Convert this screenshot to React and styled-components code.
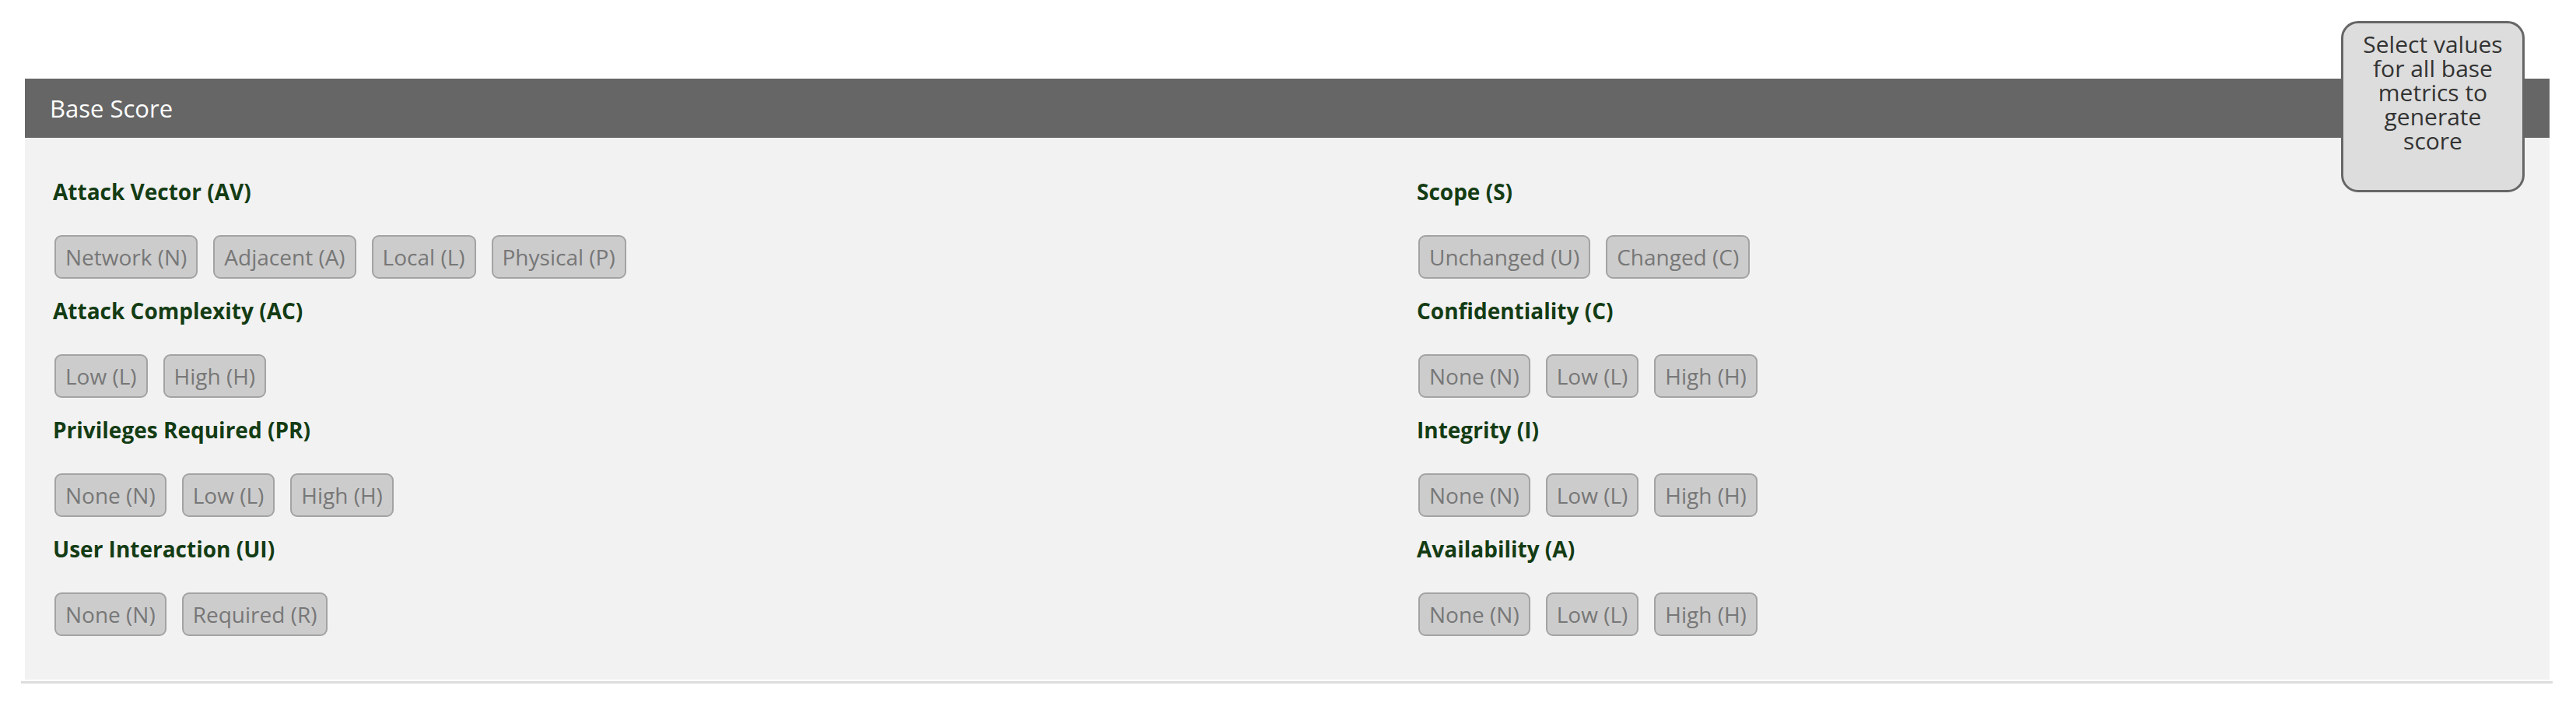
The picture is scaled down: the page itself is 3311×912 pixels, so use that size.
import React from 'react';
import styled, { createGlobalStyle } from 'styled-components';

const GlobalStyle = createGlobalStyle`
  html, body {
    margin: 0;
    padding: 0;
    background: #fff;
    font-family: 'Open Sans', 'DejaVu Sans', sans-serif;
  }
`;

const Page = styled.div`
  position: relative;
  padding: 101px 34px 0 32px;
`;

const Panel = styled.section`
  background: #f2f2f2;
`;

const PanelHeading = styled.div`
  height: 76px;
  display: flex;
  align-items: center;
  padding-left: 32px;
  background: #666;
  color: #fff;
  font-size: 31px;
`;

const PanelBody = styled.div`
  display: grid;
  grid-template-columns: 1753px 1fr;
  padding: 28px 36px 56px;
`;

const Column = styled.div`
  display: flex;
  flex-direction: column;
`;

const MetricTitle = styled.h5`
  margin: 21px 0 36px;
  font-size: 28px;
  line-height: 40px;
  font-weight: 700;
  color: #143c14;
`;

const ButtonRow = styled.div`
  display: flex;
  gap: 20px;
  padding-left: 2px;
`;

const MetricButton = styled.button`
  font-family: inherit;
  font-size: 28px;
  line-height: 40px;
  padding: 6px 12px;
  border: 2px solid #a3a3a3;
  border-radius: 9px;
  background: #ccc;
  color: #777;
  cursor: pointer;
`;

const Rule = styled.div`
  height: 3px;
  margin: 2px -4px 0 -5px;
  background: #ddd;
`;

const ScoreHint = styled.div`
  position: absolute;
  top: 27px;
  left: 3009px;
  width: 236px;
  height: 220px;
  box-sizing: border-box;
  padding: 11px 20px 0;
  border: 3px solid #666;
  border-radius: 22px;
  background: #ddd;
  color: #333;
  font-size: 30px;
  line-height: 31px;
  text-align: center;
`;

const left = [
  { title: 'Attack Vector (AV)', options: ['Network (N)', 'Adjacent (A)', 'Local (L)', 'Physical (P)'] },
  { title: 'Attack Complexity (AC)', options: ['Low (L)', 'High (H)'] },
  { title: 'Privileges Required (PR)', options: ['None (N)', 'Low (L)', 'High (H)'] },
  { title: 'User Interaction (UI)', options: ['None (N)', 'Required (R)'] },
];

const right = [
  { title: 'Scope (S)', options: ['Unchanged (U)', 'Changed (C)'] },
  { title: 'Confidentiality (C)', options: ['None (N)', 'Low (L)', 'High (H)'] },
  { title: 'Integrity (I)', options: ['None (N)', 'Low (L)', 'High (H)'] },
  { title: 'Availability (A)', options: ['None (N)', 'Low (L)', 'High (H)'] },
];

const MetricColumn = ({ metrics }) => (
  <Column>
    {metrics.map(m => (
      <div key={m.title}>
        <MetricTitle>{m.title}</MetricTitle>
        <ButtonRow>
          {m.options.map(o => <MetricButton key={o}>{o}</MetricButton>)}
        </ButtonRow>
      </div>
    ))}
  </Column>
);

const App = () => (
  <Page>
    <GlobalStyle />
    <Panel>
      <PanelHeading>Base Score</PanelHeading>
      <PanelBody>
        <MetricColumn metrics={left} />
        <MetricColumn metrics={right} />
      </PanelBody>
    </Panel>
    <Rule />
    <ScoreHint>Select values for all base metrics to generate score</ScoreHint>
  </Page>
);

export default App;
